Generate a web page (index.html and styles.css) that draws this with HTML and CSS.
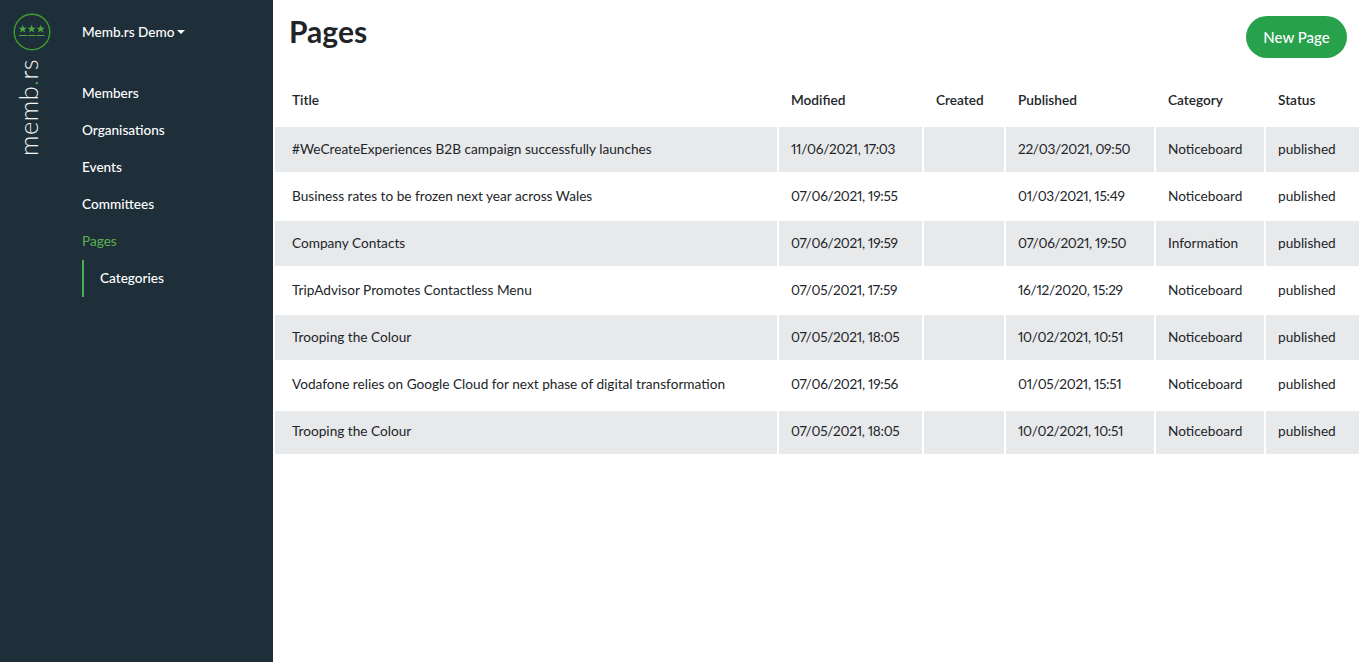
FILE: index.html
```html
<!DOCTYPE html>
<html lang="en">
<head>
    <meta charset="UTF-8">
    <meta name="viewport" content="width=device-width, initial-scale=1.0">
    <title>Pages - memb.rs</title>
    <link rel="stylesheet" href="styles.css">
</head>
<body>
    <div class="layout">
        <aside class="sidebar">
            <div class="brand">
                <svg class="brand-icon" width="38" height="38" viewBox="0 0 38 38">
                    <defs>
                        <polygon id="star" points="0,-4.300 1.100,-1.300 4.100,-1.300 1.700,.6 2.600,3.500 0,1.800 -2.600,3.500 -1.700,.6 -4.100,-1.300 -1.100,-1.300"/>
                    </defs>
                    <circle cx="19" cy="19" r="17.800" fill="none" stroke="#3f9c35" stroke-width="1.400"/>
                    <use href="#star" x="9.700" y="16" fill="#4aa83e"/>
                    <use href="#star" x="18.700" y="16" fill="#4aa83e"/>
                    <use href="#star" x="27.700" y="16" fill="#4aa83e"/>
                    <path d="M6 22.500h8M15 22.500h7.500M23.500 22.500h8" stroke="#4aa83e" stroke-width="1.200" fill="none"/>
                </svg>
                <div class="brand-name">memb<span class="brand-dot">.</span>rs</div>
            </div>
            <nav class="nav">
                <div class="org-switch">Memb.rs Demo<span class="caret"></span></div>
                <ul class="nav-list">
                    <li><a href="#">Members</a></li>
                    <li><a href="#">Organisations</a></li>
                    <li><a href="#">Events</a></li>
                    <li><a href="#">Committees</a></li>
                    <li><a href="#" class="active">Pages</a></li>
                </ul>
                <ul class="subnav-list">
                    <li><a href="#">Categories</a></li>
                </ul>
            </nav>
        </aside>

        <main class="content">
            <header class="page-header">
                <h1>Pages</h1>
                <button class="new-page">New Page</button>
            </header>
            <table class="pages-table">
                <colgroup>
                    <col class="col-title">
                    <col class="col-modified">
                    <col class="col-created">
                    <col class="col-published">
                    <col class="col-category">
                    <col class="col-status">
                </colgroup>
                <thead>
                    <tr>
                        <th>Title</th>
                        <th>Modified</th>
                        <th>Created</th>
                        <th>Published</th>
                        <th>Category</th>
                        <th>Status</th>
                    </tr>
                </thead>
                <tbody>
                    <tr>
                        <td>#WeCreateExperiences B2B campaign successfully launches</td>
                        <td class="date">11/06/2021, 17:03</td>
                        <td></td>
                        <td class="date">22/03/2021, 09:50</td>
                        <td>Noticeboard</td>
                        <td>published</td>
                    </tr>
                    <tr>
                        <td>Business rates to be frozen next year across Wales</td>
                        <td class="date">07/06/2021, 19:55</td>
                        <td></td>
                        <td class="date">01/03/2021, 15:49</td>
                        <td>Noticeboard</td>
                        <td>published</td>
                    </tr>
                    <tr>
                        <td>Company Contacts</td>
                        <td class="date">07/06/2021, 19:59</td>
                        <td></td>
                        <td class="date">07/06/2021, 19:50</td>
                        <td>Information</td>
                        <td>published</td>
                    </tr>
                    <tr>
                        <td>TripAdvisor Promotes Contactless Menu</td>
                        <td class="date">07/05/2021, 17:59</td>
                        <td></td>
                        <td class="date">16/12/2020, 15:29</td>
                        <td>Noticeboard</td>
                        <td>published</td>
                    </tr>
                    <tr>
                        <td>Trooping the Colour</td>
                        <td class="date">07/05/2021, 18:05</td>
                        <td></td>
                        <td class="date">10/02/2021, 10:51</td>
                        <td>Noticeboard</td>
                        <td>published</td>
                    </tr>
                    <tr class="row-tall">
                        <td>Vodafone relies on Google Cloud for next phase of digital transformation</td>
                        <td class="date">07/06/2021, 19:56</td>
                        <td></td>
                        <td class="date">01/05/2021, 15:51</td>
                        <td>Noticeboard</td>
                        <td>published</td>
                    </tr>
                    <tr class="row-short">
                        <td>Trooping the Colour</td>
                        <td class="date">07/05/2021, 18:05</td>
                        <td></td>
                        <td class="date">10/02/2021, 10:51</td>
                        <td>Noticeboard</td>
                        <td>published</td>
                    </tr>
                </tbody>
            </table>
        </main>
    </div>
</body>
</html>
```

FILE: styles.css
```css
* {
    box-sizing: border-box;
}
body {
    margin: 0;
    font-family: "Lato", sans-serif;
    font-size: 15px;
    color: #212529;
    background-color: #fff;
    overflow: hidden;
}
.layout {
    display: flex;
    height: 662px;
}
.sidebar {
    display: flex;
    flex: 0 0 273px;
    background-color: #1e2f3a;
}
.brand {
    display: flex;
    flex-direction: column;
    align-items: center;
    width: 64px;
    padding-top: 13px;
}
.brand-icon {
    display: block;
    flex: none;
}
.brand-name {
    writing-mode: vertical-rl;
    transform: rotate(180deg);
    margin-top: 8px;
    margin-right: 9px;
    font-size: 25.500px;
    line-height: 32px;
    font-weight: 300;
    letter-spacing: .4px;
    color: #f4f6f7;
}
.brand-dot {
    color: #4aa83e;
}
.nav {
    padding: 24px 0 0 18px;
    flex: 1;
}
.org-switch {
    font-weight: 500;
    font-size: 13.600px;
    line-height: 17px;
    color: #fff;
    margin-bottom: 34px;
}
.caret {
    display: inline-block;
    margin-left: 3px;
    vertical-align: 3px;
    border-top: 4.500px solid #fff;
    border-left: 4.500px solid transparent;
    border-right: 4.500px solid transparent;
}
.nav-list,
.subnav-list {
    list-style: none;
    margin: 0;
    padding: 0;
}
.nav-list li,
.subnav-list li {
    height: 37px;
    line-height: 37px;
}
.nav-list a,
.subnav-list a {
    display: block;
    font-size: 13.600px;
    font-weight: 500;
    color: #fff;
    text-decoration: none;
}
.nav-list a.active {
    color: #5cb04d;
    font-weight: 400;
}
.subnav-list {
    border-left: 2px solid #4caf50;
    padding-left: 16px;
}
.content {
    flex: 1;
    min-width: 0;
    overflow: hidden;
}
.page-header {
    display: flex;
    justify-content: space-between;
    align-items: flex-start;
    padding: 16px 12px 0 16px;
    height: 78px;
}
h1 {
    margin: -2px 0 0;
    font-size: 30px;
    line-height: 34px;
    font-weight: 700;
    color: #212529;
}
.new-page {
    width: 101px;
    height: 42px;
    border: 0;
    border-radius: 21px;
    background-color: #28a14c;
    color: #fff;
    font-family: inherit;
    font-size: 15px;
    font-weight: 500;
}
.pages-table {
    table-layout: fixed;
    width: 1086px;
    border-collapse: separate;
    border-spacing: 2px;
    margin-top: -2px;
}
.col-title { width: 502px; }
.col-modified { width: 143px; }
.col-created { width: 80px; }
.col-published { width: 148px; }
.col-category { width: 108px; }
.col-status { width: 95px; }
th,
td {
    padding: 0 0 2px 12px;
    text-align: left;
    font-size: 13.650px;
    white-space: nowrap;
    overflow: hidden;
}
th:first-child,
td:first-child {
    padding-left: 17px;
}
th {
    height: 47px;
    font-weight: 600;
    padding-bottom: 4px;
}
td {
    height: 45px;
    font-weight: 400;
}
td.date {
    font-variant-numeric: proportional-nums;
    letter-spacing: -0.3px;
}
.row-tall td {
    height: 47px;
    padding-bottom: 4px;
}
.row-short td {
    height: 43px;
    padding-bottom: 3px;
}
tbody tr:nth-child(odd) td {
    background-color: #e8e9eb;
}
```
